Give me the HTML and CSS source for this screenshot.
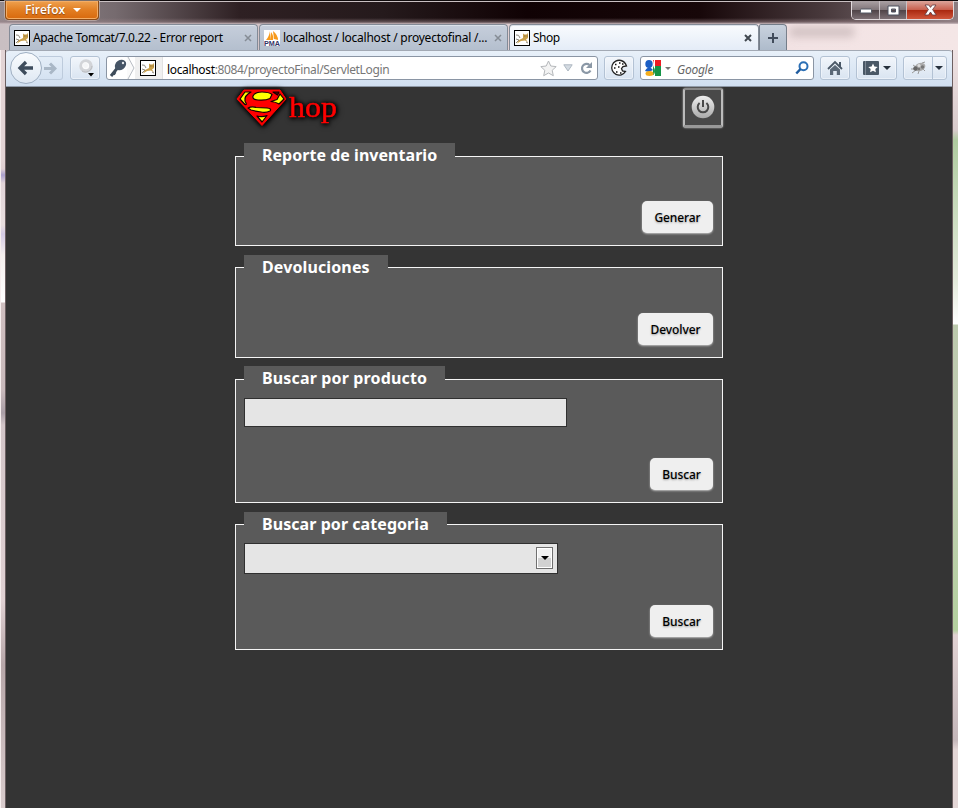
FILE: index.html
```html
<!DOCTYPE html>
<html lang="es">
<head>
<meta charset="utf-8">
<title>Shop</title>
<link rel="stylesheet" href="styles.css">
</head>
<body>
<svg width="0" height="0" class="defs">
  <symbol id="tomcat" viewBox="0 0 16 16">
    <rect x=".5" y=".5" width="15" height="15" fill="#fff" stroke="#000"/>
    <path d="M9 3.500l1.500 1h2L14 3v5l-2 1.500 2 3-3-2-4 .5-4 2.500 2-3.500 4-2z" fill="#c9a04c"/>
    <path d="M2 5q3-1 4 3M2 9l3 1-3 3M12 12l2 1" fill="none" stroke="#8d897f"/>
    <path d="M10.500 6h.8M12.800 6h.7" stroke="#5c4a25"/>
  </symbol>
</svg>
<div class="window">
  <header class="titlebar">
    <div class="firefox">Firefox<i class="tri white"></i></div>
    <div class="controls">
      <span class="min"><svg width="14" height="8"><rect x="1.5" y="3" width="11" height="4" rx=".5" fill="#fff" stroke="#555a66"/></svg></span>
      <span class="max"><svg width="13" height="11"><path d="M1 1h11v9H1zM4.500 4v3h4V4z" fill="#fff" fill-rule="evenodd" stroke="#4c5260"/></svg></span>
      <span class="close"><svg width="13" height="12"><path d="M1 1h3.700l1.800 2.400L8.300 1H12L8.600 5.500 12.200 11H8.500L6.500 8 4.500 11H.8l3.600-5.500z" fill="#fff" stroke="#5d3a40" stroke-width=".8"/></svg></span>
    </div>
  </header>
  <nav class="tabs">
    <div class="tab"><svg class="fav"><use href="#tomcat"/></svg><span class="t1">Apache Tomcat/7.0.22 - Error report</span><svg class="x" width="8" height="8"><path d="M1 1l6 6M7 1L1 7"/></svg></div>
    <div class="tab"><svg class="fav" viewBox="0 0 16 16"><rect width="16" height="16" fill="#fff"/><path d="M6 1v9H2q3-3 4-9M9 1q5 4 5 9l-4-1zM7 2q3 4 2 8H6z" fill="#f79a1c"/><text x="0" y="16" class="pma" textLength="16" lengthAdjust="spacingAndGlyphs">PMA</text></svg><span class="t2">localhost / localhost / proyectofinal /...</span><svg class="x" width="8" height="8"><path d="M1 1l6 6M7 1L1 7"/></svg></div>
    <div class="tab active"><svg class="fav"><use href="#tomcat"/></svg><span class="t3">Shop</span><svg class="x" width="8" height="8"><path d="M1 1l6 6M7 1L1 7"/></svg></div>
    <div class="plus"><svg width="12" height="12"><path d="M6 1v10M1 6h10" stroke="#414c5b" stroke-width="2"/></svg></div>
    <span class="ghost"></span>
  </nav>
  <div class="lower">
    <div class="edge left"></div>
    <div class="client">
      <div class="toolbar">
        <div class="back"><svg width="18" height="16"><path d="M9 2L3 8l6 6M3.500 8H16" fill="none" stroke="#3e4c5c" stroke-width="3.300"/></svg></div>
        <div class="forward"><svg width="14" height="13"><path d="M7 1.500l5 5-5 5M1 6.500h10" fill="none" stroke="#a9b7c6" stroke-width="3"/></svg></div>
        <div class="btn ring"><svg width="20" height="20"><circle cx="9" cy="8" r="5" fill="#f4f5f7" stroke="#d2d4d8" stroke-width="3.500"/><circle cx="8.500" cy="7.500" r="3" fill="none" stroke="#fff"/><path d="M5 13a6.500 6.500 0 0 0 10-5" fill="none" stroke="#b9bbbf"/><path d="M11 15h6l-3 3.500z" fill="#000"/></svg></div>
        <div class="url">
          <span class="key"><svg width="18" height="18"><path d="M2 17L10 7M3.500 13l3 2" stroke="#3e4c5a" stroke-width="3"/><ellipse cx="11.500" cy="6" rx="6" ry="4.800" transform="rotate(-35 11.500 6)" fill="#465566"/><circle cx="14" cy="4" r="1.200" fill="#e7eaee"/></svg></span>
          <svg class="chev" width="8" height="22"><path d="M0 0h1l6 11-6 11H0z" fill="#fafafa"/><path d="M1 0l6 11-6 11" fill="none" stroke="#b7bcc3"/></svg>
          <span class="site"><svg class="fav"><use href="#tomcat"/></svg></span>
          <span class="address"><b>localhost</b>:8084/proyectoFinal/ServletLogin</span>
          <svg class="star" width="17" height="17"><path d="M8.500 1l2.300 5 5.400.6-4 3.700 1.100 5.400-4.800-2.700-4.800 2.700 1.100-5.400-4-3.700 5.400-.6z" fill="#f3f3f3" stroke="#b4b7ba"/></svg>
          <svg class="drop" width="10" height="8"><path d="M.8.800h8.400L5 7z" fill="#d4dbe2" stroke="#aeb8c2"/></svg>
          <svg class="reload" width="13" height="13"><path d="M9.500 3A4.500 4.500 0 1 0 10.500 8.500" fill="none" stroke="#8b98a6" stroke-width="2.200"/><path d="M12 0v6H6z" fill="#8b98a6"/></svg>
        </div>
        <div class="btn cookie"><svg width="18" height="18"><path d="M11 1.500A7.400 7.400 0 1 0 15.500 12.500L12.500 12 11.500 9.500 13 7.500 16.500 7Q15 2.500 11 1.500z" fill="#fff" stroke="#222" stroke-width="1.300"/><path d="M5 5.500h1.500M9 4h1.500M4 9h1.500M8 8h1.500M6 13h1.500M10 14h1.500M12 5h1.500" stroke="#111" stroke-width="1.500"/></svg></div>
        <div class="search">
          <svg width="16" height="16"><path d="M8 0h8v6H8z" fill="#ed1c24"/><path d="M8 6h8v10H8z" fill="#159447"/><path d="M0 0h7v10H0z" fill="#fff"/><path d="M9 0q-1 2-1 5c0 2 2 3 2 6 0 2-1 4-3 5h3V0z" fill="#fff"/><ellipse cx="4" cy="4" rx="3.700" ry="4" fill="#1c5fc5"/><path d="M5 7l3 3-4 2-4-1q1-3 5-4z" fill="#1c5fc5"/><ellipse cx="4.500" cy="13.500" rx="4" ry="2.500" fill="#f4ad1c"/></svg>
          <i class="tri small"></i><em>Google</em>
          <svg class="mag" width="14" height="14"><circle cx="8.500" cy="5.200" r="4" fill="none" stroke="#2b6fb5" stroke-width="2"/><path d="M5.500 8L1.300 12.500" stroke="#1f5b9e" stroke-width="2.500"/></svg>
        </div>
        <div class="btn home"><svg width="16" height="16"><path d="M1 9l7-7 7 7" fill="none" stroke="#4a5867" stroke-width="1.800"/><path d="M8 5l5 4.500V15H9.800v-4H6.200v4H3V9.500z" fill="#5a6877"/><path d="M12 2h2v5h-2z" fill="#4a5867"/></svg></div>
        <div class="btn marks"><svg width="16" height="14"><rect width="16" height="14" rx="1" fill="#4a5866"/><path d="M2.500 0v14" stroke="#7c8793"/><path d="M10 2.500l1.400 3 3.300.4-2.400 2.200.6 3.200-2.900-1.600-2.900 1.600.6-3.200-2.400-2.200 3.300-.4z" fill="#fff"/></svg><i class="tri"></i></div>
        <div class="btn bug"><span><svg width="18" height="14"><path d="M2 12l4-3M3 4l3 2M8 13l1-3M12 2l3-1M13 8l2 2M1 8h4" stroke="#999"/><ellipse cx="10" cy="6" rx="5.500" ry="4" transform="rotate(-20 10 6)" fill="#aaa"/><circle cx="5.500" cy="7.500" r="2.300" fill="#666"/><circle cx="12.500" cy="6" r="1.700" fill="#777"/><circle cx="9" cy="4.500" r="1.500" fill="#ddd"/><circle cx="9" cy="8" r="1.200" fill="#777"/></svg></span><span class="more"><i class="tri"></i></span></div>
      </div>
      <main class="page">
        <div class="column">
          <div class="masthead">
            <svg class="logo" width="110" height="46">
              <g class="glow">
                <path d="M11 3h36l6 9-24 26.500L4 12z" fill="#f00" stroke="#f00"/>
              </g>
              <g fill="#ff0" stroke="#120000" stroke-width="1.200">
                <path d="M12 5l-5 7 5 5.500q2 .5 1-1.500-3-5 2-9l3-2z"/>
                <path d="M20 9q2-4 9-4t10 2.500l-2 4q-4 2-12 1.500-6-.5-5-4z"/>
                <path d="M40 5h6l-1.500 3z" fill="#5c0000"/>
                <path d="M47 7l4 5-5 5q-3-2-8-2.500l6-2z"/>
                <path d="M15 21q4-2 8-.5l11 .5q5 .5 3 3-4 2-9 1-7-1-10-2z"/>
                <path d="M24 29q5 1.500 10-.5L29 35z"/>
              </g>
              <text x="56" y="30" class="hop" textLength="48" lengthAdjust="spacingAndGlyphs">hop</text>
            </svg>
            <div class="power"><svg width="24" height="24"><defs><linearGradient id="pg" x2="0" y2="1"><stop stop-color="#eee"/><stop offset="1" stop-color="#aaa"/></linearGradient></defs><circle cx="12" cy="12" r="11.300" fill="url(#pg)"/><path d="M8.600 8A5.300 5.300 0 1 0 15.400 8M12 5v7" fill="none" stroke="#484848" stroke-width="2"/></svg></div>
          </div>
          <section class="panel p1"><h2>Reporte de inventario</h2><button>Generar</button></section>
          <section class="panel p2"><h2>Devoluciones</h2><button>Devolver</button></section>
          <section class="panel p3"><h2>Buscar por producto</h2><div class="input"></div><button class="b">Buscar</button></section>
          <section class="panel p4"><h2>Buscar por categoria</h2><div class="select"><span><i class="tri"></i></span></div><button class="b">Buscar</button></section>
        </div>
      </main>
    </div>
    <div class="edge right"></div>
  </div>
</div>
</body>
</html>
```
FILE: styles.css
```css
* { box-sizing: border-box; }
body { margin: 0; overflow: hidden; font: 12px "Noto Sans", "Open Sans", sans-serif; color: #000; }
svg { display: block; flex: none; }
.defs { position: absolute; }
.window { width: 958px; height: 808px; display: flex; flex-direction: column; background: linear-gradient(90deg, #c9bfc2, #d8c8cc 40%, #f3e3e4 84%, #f4e6e6) ; }
.titlebar { height: 24px; flex: none; display: flex; justify-content: space-between; padding: 0 4px 0 5px; border-top: 1px solid #100b0c; background: linear-gradient(180deg, #c9c0c2 0 1px, transparent 1px 17px, #99838888 21px, #cbbcc0), linear-gradient(90deg, #958b8f 0, #766b6f 12%, #2e2023 25%, #251a1c 40%, #100204 55%, #170709 73%, #48393c 86%, #8c7e82); }
.firefox { width: 94px; height: 19px; border: 1px solid #8c4c17; border-top: 0; border-radius: 0 0 4px 4px; box-shadow: 0 0 0 1px #d9c7bd88, inset 0 0 0 1px #f4ad65; background: linear-gradient(#eea14f, #e27e22 50%, #d8690d); color: #fff; font: 600 12px/18px "Open Sans", sans-serif; display: flex; align-items: center; padding-left: 19px; text-shadow: 0 1px 1px #8a4512; }
.tri { display: block; flex: none; width: 0; height: 0; border: 4px solid transparent; border-top-color: #26313d; border-bottom: 0; }
.tri.white { border-top-color: #fff; margin-left: 8px; }
.tri.small { border-width: 3px 3px 0; border-top-color: #777; margin: 0 6px 0 4px; }
.controls { display: flex; height: 19px; border: 1px solid #e1dadd; border-top: 0; border-radius: 0 0 5px 5px; overflow: hidden; }
.controls span { width: 28px; display: flex; align-items: center; justify-content: center; border-right: 1px solid #c9c1c5; background: linear-gradient(#aaa1a4, #81767a 48%, #4e4246 50%, #7c6f74); }
.controls .max { width: 27px; }
.controls .close { width: 46px; border: 0; background: linear-gradient(#dca59b, #c9614f 48%, #a9270f 50%, #d0563b); }
.tabs { height: 26px; flex: none; display: flex; gap: 1px; padding-left: 9px; }
.tab { width: 249px; border: 1px solid #848b97; border-bottom: 0; border-radius: 4px 4px 0 0; background: linear-gradient(#c6cedb, #b4bfce); box-shadow: inset 0 1px #dbe1e9; display: flex; align-items: center; padding: 0 5px 0 4px; white-space: nowrap; }
.tab span { margin-left: 3px; }
.tab .t1 { letter-spacing: -.34px; }
.tab .t2 { letter-spacing: -.23px; }
.tab .t3 { letter-spacing: -.5px; }
.tab.active { background: linear-gradient(#f9fbfe, #e4ecf7); }
.fav { width: 16px; height: 16px; }
.pma { font: bold 7px "Liberation Sans", sans-serif; fill: #333366; }
.x { margin-left: auto; fill: none; stroke: #858c95; stroke-width: 1.500; }
.active .x { stroke: #414850; stroke-width: 2; }
.plus { width: 28px; border: 1px solid #747d89; border-bottom: 0; border-radius: 2px 4px 0 0; margin-left: -1px; background: linear-gradient(#c9d2de, #aebbcb); display: flex; align-items: center; justify-content: center; }
.active { width: 250px; padding-right: 6px; }
.ghost { width: 64px; height: 10px; margin: 3px 0 0 2px; background: #b9a9aa; filter: blur(4px); opacity: .6; }
.lower { flex: 1; min-height: 0; display: flex; }
.edge { width: 6px; flex: none; }
.left { border-left: 1px solid #f6eeee; border-right: 1px solid #6d6062; background: linear-gradient(#e3d4d5 0 110px, #dfcfd2 119px, #aaa0ce 125px, #e1d4d8 133px, #e8dede 175px, #d4cae4 184px, #f5efee 205px, #fff 252px, #cfbfc0 253px, #c9babc 340px, #aa9fa7 363px, #d2c5c8 375px, #e0d1d3 550px, #b7a7a9 615px, #d9cccd); }
.right { border-left: 1px solid #6d6062; background: linear-gradient(#efe2e3, #d8cbcc 80px, #afcba0 90px, #e3eadb 230px, #fff 274px, #bcc9ad 275px, #c3ccb6 400px, #b4d09f 580px, #e1d2d3 585px, #c4b7ba 690px, #e3d6d6 700px); }
.client { flex: 1; min-width: 0; display: flex; flex-direction: column; }
.toolbar { height: 37px; flex: none; display: flex; align-items: center; border-top: 1px solid #a2a9b4; border-bottom: 1px solid #8e98a6; border-radius: 3px 3px 0 0; background: linear-gradient(#e8f0f9, #d0dff0); padding: 0 0 1px 4px; }
.back { width: 32px; height: 32px; flex: none; border: 1px solid #9fafc2; border-radius: 50%; background: linear-gradient(#fafcfe, #dfe8f3); display: flex; align-items: center; justify-content: center; z-index: 1; }
.forward { width: 24px; height: 24px; margin-left: -3px; border: 1px solid #bdcbdc; border-left: 0; display: flex; align-items: center; padding-left: 4px; border-radius: 0 3px 3px 0; }
.btn { height: 24px; width: 30px; flex: none; border: 1px solid #b3c2d4; border-radius: 3px; background: linear-gradient(#f2f6fb, #d9e4f1); box-shadow: inset 0 0 0 1px #f5f9fd99; display: flex; align-items: center; justify-content: center; }
.ring { margin-left: 7px; padding-left: 4px; }
.url { width: 492px; height: 24px; margin-left: 6px; flex: none; border: 1px solid #8a95a4; border-radius: 3px; background: #fff; display: flex; align-items: center; }
.key { width: 20px; height: 22px; padding: 2px 0 0 2px; }
.site { width: 28px; height: 22px; padding: 3px 0 0 5px; background: #f0f0f0; border-right: 1px solid #e2e2e2; }
.address { margin-left: 4px; color: #777; white-space: nowrap; width: 224px; letter-spacing: -.34px; padding-top: 2px; }
.address b { font-weight: normal; color: #000; }
.star { margin-left: 149px; }
.drop { margin-left: 6px; }
.reload { margin-left: 7px; }
.cookie { margin-left: 6px; width: 30px; }
.search { width: 174px; height: 24px; margin-left: 6px; flex: none; border: 1px solid #8a95a4; border-radius: 3px; background: #fff; display: flex; align-items: center; padding: 0 4px; }
.search em { color: #666; letter-spacing: -.25px; padding-top: 2px; }
.mag { margin-left: auto; }
.home { margin-left: 6px; }
.marks { width: 41px; margin-left: 6px; gap: 4px; }
.bug { width: 44px; margin-left: 6px; justify-content: flex-start; }
.bug span { width: 28px; padding-left: 6px; }
.bug .more { width: 14px; height: 22px; border-left: 1px solid #b3c2d4; padding: 9px 0 0 2px; }
.page { flex: 1; background: #343434; min-height: 0; }
.column { width: 488px; margin-left: 229px; }
.masthead { height: 69px; display: flex; justify-content: space-between; }
.logo { margin-left: -2px; overflow: visible; }
.logo path { stroke-linejoin: round; }
.glow, .hop { filter: drop-shadow(0 0 2px #000) drop-shadow(1px 1px 2px #000); }
.hop { font: 30px "Liberation Serif", serif; fill: #f00; stroke: #f00; stroke-width: .5; }
.power { width: 40px; height: 40px; margin-top: 1px; border: 2px solid #bbb; border-top-color: #888; border-bottom: 3px solid #999; border-radius: 3px; box-shadow: 0 0 2px #bbb; background: #494949; display: flex; align-items: center; justify-content: center; padding: 0 1px 2px 0; }
.panel { border: 1px solid #f5f5f5; background: #5a5a5a; margin-bottom: 21px; padding: 0 9px 12px 8px; display: flex; flex-direction: column; align-items: flex-start; }
.p1 { height: 90px; }
.p2 { height: 91px; }
.p3 { height: 124px; }
.p4 { height: 126px; }
h2 { margin: -14px 0 0; width: 211px; height: 25px; padding-left: 18px; background: #5a5a5a; color: #fff; font: bold 16px/24px "Noto Sans", sans-serif; white-space: nowrap; flex: none; letter-spacing: .03px; }
.p2 h2 { width: 144px; margin-top: -13px; letter-spacing: .12px; }
.p3 h2 { width: 201px; letter-spacing: .15px; }
.p4 h2 { width: 203px; margin-top: -13px; letter-spacing: .06px; }
button { width: 71px; height: 32px; margin: auto 0 0 auto; flex: none; padding: 0; border: 0; border-radius: 5px; background: #efefef; box-shadow: 0 1px 2px #bbb; font: 500 12px "Noto Sans", sans-serif; letter-spacing: -.1px; color: #000; text-shadow: 0 1px 2px #999; }
.p2 button { width: 75px; }
button.b { width: 63px; }
.input { width: 323px; height: 29px; margin-top: 7px; border: 1px solid #303030; background: #e5e5e5; }
.select { width: 314px; height: 31px; margin-top: 6px; border: 1px solid #303030; background: #e5e5e5; display: flex; justify-content: flex-end; padding: 3px 4px; }
.select span { width: 17px; height: 22px; border: 1px solid #707070; box-shadow: inset 0 0 0 1px #fff; background: linear-gradient(#f2f2f2 50%, #d2d2d2 50%); display: flex; align-items: center; justify-content: center; }
.select .tri { border-top-color: #000; }
```
